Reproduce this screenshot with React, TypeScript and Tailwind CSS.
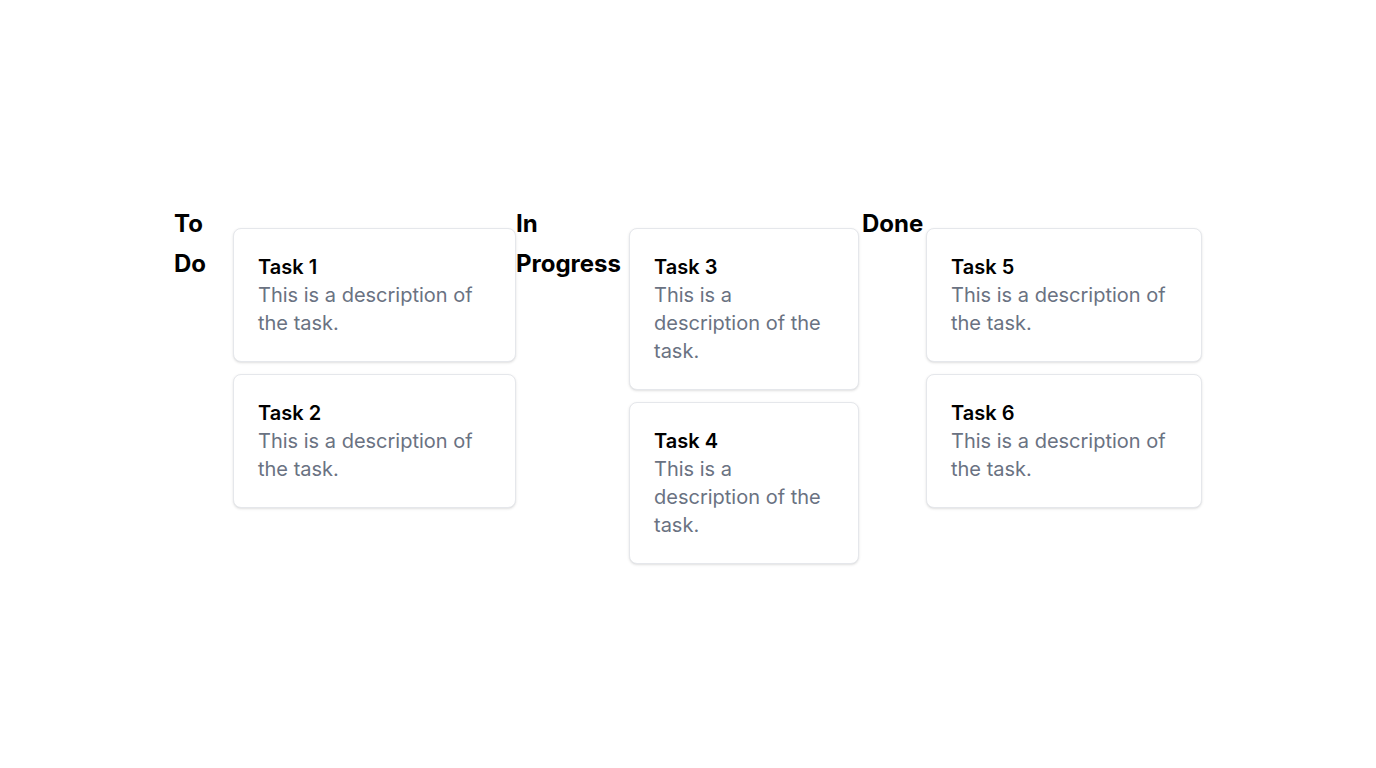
import React from "react";

interface Task {
  id: number;
  title: string;
  description: string;
}

interface Column {
  title: string;
  headingClass: string;
  listClass: string;
  tasks: Task[];
}

const desc = "This is a description of the task.";

// widths taken from the board: the heading squeezes, the cards take the rest
const columns: Column[] = [
  {
    title: "To Do",
    headingClass: "w-[59px]",
    listClass: "w-[283px]",
    tasks: [
      { id: 1, title: "Task 1", description: desc },
      { id: 2, title: "Task 2", description: desc },
    ],
  },
  {
    title: "In Progress",
    headingClass: "w-[113px]",
    listClass: "w-[230px] mr-[3px]",
    tasks: [
      { id: 3, title: "Task 3", description: desc },
      { id: 4, title: "Task 4", description: desc },
    ],
  },
  {
    title: "Done",
    headingClass: "w-[64px]",
    listClass: "w-[276px]",
    tasks: [
      { id: 5, title: "Task 5", description: desc },
      { id: 6, title: "Task 6", description: desc },
    ],
  },
];

function TaskCard({ task }: { task: Task }) {
  return (
    <div className="bg-white border border-gray-200 rounded-lg shadow-sm p-6">
      <h3 className="text-xl leading-7 font-semibold text-black">
        {task.title}
      </h3>
      <p className="text-xl leading-7 text-gray-500">{task.description}</p>
    </div>
  );
}

export default function App() {
  return (
    <div
      className="min-h-screen w-full bg-white flex items-center justify-center"
      style={{ fontFamily: "Inter, 'Noto Sans', sans-serif" }}
    >
      <div className="flex flex-row">
        {columns.map((column) => (
          <div key={column.title} className="flex flex-row items-start">
            <h2
              className={`${column.headingClass} shrink-0 text-2xl leading-10 font-bold text-black`}
            >
              {column.title}
            </h2>
            <div className={`${column.listClass} shrink-0 mt-6 flex flex-col gap-3`}>
              {column.tasks.map((task) => (
                <TaskCard key={task.id} task={task} />
              ))}
            </div>
          </div>
        ))}
      </div>
    </div>
  );
}
